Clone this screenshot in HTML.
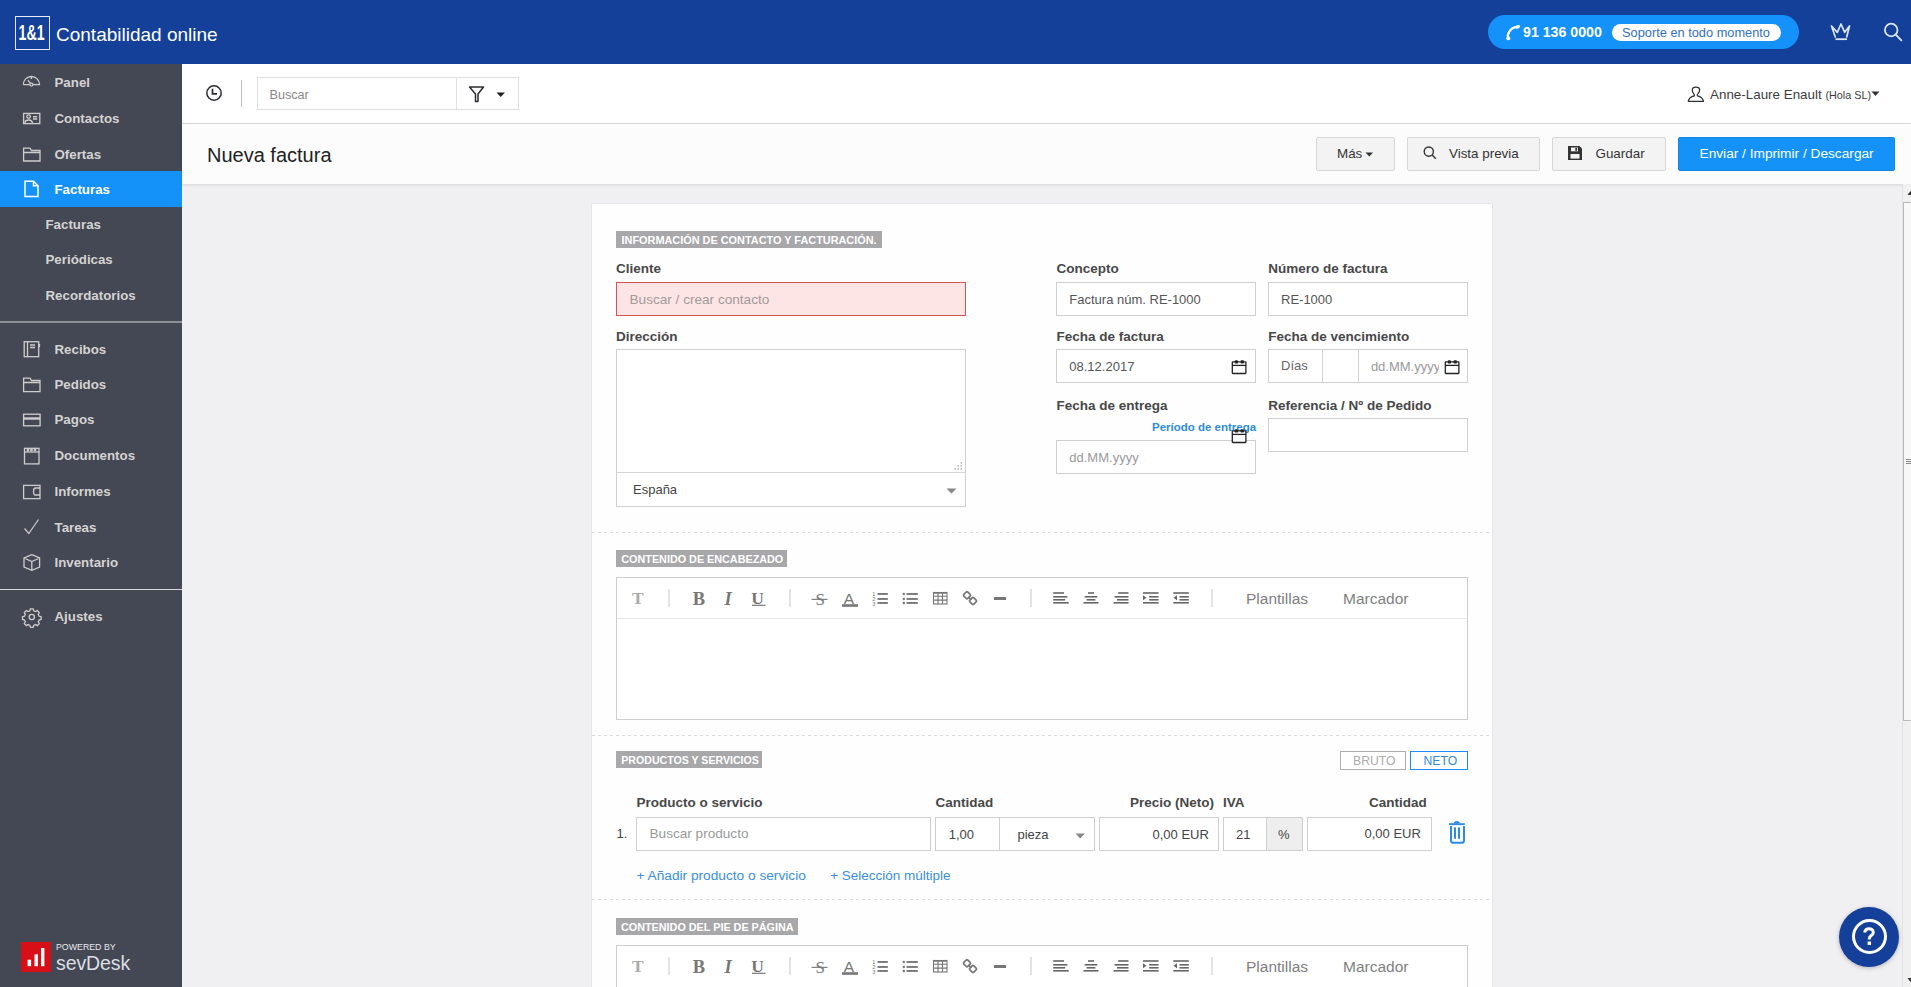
<!DOCTYPE html>
<html><head><meta charset="utf-8">
<style>
*{box-sizing:border-box;margin:0;padding:0}
html,body{width:1911px;height:987px;overflow:hidden;background:#f0eff2;font-family:"Liberation Sans",sans-serif;position:relative}
.a{position:absolute}
.t{position:absolute;line-height:1;white-space:nowrap}
#hdr{left:0;top:0;width:1911px;height:64px;background:#14409a}
#side{left:0;top:64px;width:182px;height:923px;background:#434854}
#topbar{left:182px;top:64px;width:1729px;height:60px;background:#fff;border-bottom:1px solid #dcdcdc}
#titlebar{left:182px;top:124px;width:1729px;height:60px;background:#fcfcfc;box-shadow:0 1px 3px rgba(0,0,0,.12)}
.nav{color:#d5d3d2;font-weight:bold;font-size:13.3px}
.navi{position:absolute;left:23px}
.btn{position:absolute;top:137px;height:34px;background:#f3f3f3;border:1px solid #d7d7d7;border-radius:2px}
.lbl{color:#484848;font-weight:bold;font-size:13.3px}
.inp{position:absolute;background:#fff;border:1px solid #cfcfcf}
.itx{color:#555;font-size:13px}
.ph{color:#9a9a9a;font-size:13px}
.badge{position:absolute;left:616px;height:17px;background:#a8a7aa;color:#fff;font-weight:bold;font-size:11px}
.dash{position:absolute;left:592px;width:900px;height:1px;background-image:linear-gradient(to right,#dcdcdc 50%,transparent 50%);background-size:6px 1px}
</style></head><body>

<!-- HEADER -->
<div id="hdr" class="a">
  <div class="a" style="left:15px;top:16px;width:34.5px;height:34px;border:1px solid #e8ecf6"></div>
  <svg class="a" style="left:15px;top:16px" width="35" height="34" viewBox="0 0 35 34"><text x="3.6" y="24.3" font-family="Liberation Sans" font-weight="bold" font-size="21.5" fill="#fff" textLength="26" lengthAdjust="spacingAndGlyphs">1&amp;1</text></svg>
  <div class="t" style="left:56px;top:24.5px;color:#fff;font-size:19px">Contabilidad online</div>
  <div class="a" style="left:1488px;top:15px;width:311px;height:34px;border-radius:17px;background:#1592fa"></div>
  <div class="t" style="left:1523px;top:25px;color:#fff;font-weight:bold;font-size:14.2px">91 136 0000</div>
  <div class="a" style="left:1612px;top:24px;width:169px;height:17px;border-radius:9px;background:#fff"></div>
  <div class="t" style="left:1622px;top:26.5px;color:#3270c0;font-size:12.8px">Soporte en todo momento</div>

  <svg class="a" style="left:1504px;top:24px" width="18" height="18" viewBox="0 0 18 18"><path d="M4 14.2 C3 10 5.5 5 11 3.2" fill="none" stroke="#fff" stroke-width="2.3" stroke-linecap="round"/><ellipse cx="4.3" cy="14.3" rx="2" ry="1.9" fill="#fff"/><ellipse cx="13.5" cy="2.9" rx="2.6" ry="1.7" transform="rotate(-20 13.5 2.9)" fill="#fff"/></svg>
  <svg class="a" style="left:1820px;top:15px" width="91" height="35" viewBox="1820 15 91 35" fill="none" stroke="#dbe5f5" stroke-width="1.7" stroke-linecap="round" stroke-linejoin="round"><path d="M1831.5 26 L1835.3 37 M1849.5 26 L1846.7 37 M1831.5 26 L1837.3 32.3 L1841 24 L1844.7 32.3 L1849.5 26"/><path d="M1835.5 39.2 H1847" stroke-width="1.8" stroke-linecap="butt"/><circle cx="1891.2" cy="30" r="6.3" stroke-width="1.8"/><path d="M1895.8 34.6 L1901.3 40.3" stroke-width="1.9"/></svg>
  
</div>

<!-- SIDEBAR -->
<div id="side" class="a"></div>
<div class="a" style="left:0;top:171px;width:182px;height:36px;background:#1592fa"></div>


<!-- SIDEBAR CONTENT -->
<svg class="a" style="left:0;top:64px" width="182" height="923" viewBox="0 64 182 923" fill="none" stroke="#cfcdcc" stroke-width="1.3">
  <!-- panel gauge -->
  <path d="M23.3 84.6 A8.1 8.1 0 0 1 39.5 84.6 H33 M29.8 84.6 H23.3"/>
  <path d="M31.4 76.8 v2.2 M27.8 80.2 L30.5 83.4"/><circle cx="31.4" cy="84.6" r="1.5"/>
  <!-- contactos card -->
  <rect x="23.6" y="113.4" width="16.2" height="10.2"/>
  <circle cx="28.6" cy="116.6" r="1.8"/>
  <path d="M24.8 123.4 q0-3.4 3.8-3.4 q3.8 0 3.8 3.4"/>
  <path d="M33 116.8 h4.2 M33 119 h4.2" stroke-width="1.5"/>
  <!-- ofertas folder -->
  <path d="M23.6 161 V148.2 H30 L31.5 150.5 H40 V161 Z M23.6 152.5 H40"/>
  <!-- recibos notebook -->
  <rect x="24.2" y="341.7" width="14.5" height="15"/>
  <path d="M27.5 341.7 V356.7 M30 345 h5 M30 347.5 h5 M39.5 344 v3" />
  <!-- pedidos folder -->
  <path d="M23.6 391.6 V378.2 H30 L31.5 380.5 H40 V391.6 Z M23.6 382.5 H40"/>
  <!-- pagos card -->
  <rect x="23.6" y="414.2" width="16.5" height="11.6"/>
  <path d="M23.6 418.5 H40" stroke-width="2.4"/>
  <!-- documentos -->
  <rect x="24.5" y="448.3" width="14.5" height="15.6"/>
  <path d="M24.5 452 H39"/>
  <circle cx="28" cy="450" r=".8"/><circle cx="31.5" cy="450" r=".8"/><circle cx="35" cy="450" r=".8"/>
  <!-- informes wallet -->
  <path d="M40 488 V485.3 H23.6 V498.7 H40 V495 M40 488 H35.5 Q33.5 488 33.5 491.5 Q33.5 495 35.5 495 H40 Z"/>
  <!-- tareas check -->
  <path d="M24.5 528.5 L28.8 533.5 L38.5 519.5" stroke-width="1.2"/>
  <!-- inventario cube -->
  <path d="M31.8 554.6 L39.6 558 V567 L31.8 570.3 L24 567 V558 Z M24 558 L31.8 561.6 L39.6 558 M31.8 561.6 V570.3"/>
  <!-- ajustes gear -->
  <circle cx="31.8" cy="617" r="2.6"/>
  <path d="M30.4 608.8 h2.8 l.5 2 l1.8 .8 l1.8-1 l2 2 l-1 1.8 l.8 1.8 l2 .5 v2.8 l-2 .5 l-.8 1.8 l1 1.8 l-2 2 l-1.8-1 l-1.8 .8 l-.5 2 h-2.8 l-.5-2 l-1.8-.8 l-1.8 1 l-2-2 l1-1.8 l-.8-1.8 l-2-.5 v-2.8 l2-.5 l.8-1.8 l-1-1.8 l2-2 l1.8 1 l1.8-.8 Z"/>
  <!-- separators -->
  <path d="M0 322 H182 M0 589.5 H182" stroke="#d9d9dc" stroke-width="1.2"/>
</svg>
<svg class="a" style="left:24px;top:180px" width="16" height="18" viewBox="0 0 16 18" fill="none" stroke="#fff" stroke-width="1.5">
  <path d="M1 1.2 H9.5 L14 5.7 V16.5 H1 Z M9.5 1.2 V5.7 H14"/>
</svg>
<div class="t nav" style="left:54.5px;top:76px">Panel</div>
<div class="t nav" style="left:54.5px;top:112px">Contactos</div>
<div class="t nav" style="left:54.5px;top:147.5px">Ofertas</div>
<div class="t nav" style="left:54.5px;top:183px;color:#fff">Facturas</div>
<div class="t nav" style="left:45.5px;top:218px">Facturas</div>
<div class="t nav" style="left:45.5px;top:253px">Periódicas</div>
<div class="t nav" style="left:45.5px;top:289px">Recordatorios</div>
<div class="t nav" style="left:54.5px;top:342.7px">Recibos</div>
<div class="t nav" style="left:54.5px;top:377.7px">Pedidos</div>
<div class="t nav" style="left:54.5px;top:413.3px">Pagos</div>
<div class="t nav" style="left:54.5px;top:449px">Documentos</div>
<div class="t nav" style="left:54.5px;top:485px">Informes</div>
<div class="t nav" style="left:54.5px;top:520.7px">Tareas</div>
<div class="t nav" style="left:54.5px;top:556.4px">Inventario</div>
<div class="t nav" style="left:54.5px;top:609.6px">Ajustes</div>
<!-- sevdesk -->
<div class="a" style="left:21px;top:942px;width:30px;height:30px;background:#d90f17"></div>
<svg class="a" style="left:21px;top:942px" width="30" height="30" viewBox="0 0 30 30"><rect x="6.6" y="17.7" width="3.5" height="6.5" fill="#fff"/><rect x="13.5" y="12.3" width="3.4" height="11.9" fill="#fff"/><rect x="20" y="6" width="3.4" height="18.2" fill="#fff"/></svg>
<div class="t" style="left:56px;top:943px;color:#e9e9ec;font-size:8.8px">POWERED BY</div>
<div class="t" style="left:56px;top:953.6px;color:#dddee3;font-size:19.5px;font-weight:300;letter-spacing:-.1px">sevDesk</div>

<!-- TOP BAR -->
<div id="topbar" class="a"></div>
<div id="titlebar" class="a"></div>
<div class="t" style="left:207px;top:145px;color:#222;font-size:20px">Nueva factura</div>


<!-- topbar content -->
<svg class="a" style="left:205px;top:84px" width="18" height="18" viewBox="0 0 18 18" fill="none" stroke="#2b2b33" stroke-width="1.5"><circle cx="9" cy="9" r="7.2"/><path d="M7.5 4.8 V9.8 H12" stroke-width="1.7"/></svg>
<div class="a" style="left:241px;top:80px;width:1px;height:27px;background:#bdbdbd"></div>
<div class="a" style="left:257px;top:77px;width:262px;height:33px;border:1px solid #dedede;background:#fff"></div>
<div class="a" style="left:456px;top:78px;width:1px;height:31px;background:#e2e2e2"></div>
<div class="t" style="left:269.5px;top:88.5px;color:#8a8a8a;font-size:12.6px">Buscar</div>
<svg class="a" style="left:468px;top:86px" width="17" height="17" viewBox="0 0 17 17" fill="none" stroke="#2b2b33" stroke-width="1.5"><path d="M1.5 1 H15.5 L10 8 V15.5 H7.5 V8 Z" stroke-linejoin="round"/></svg>
<svg class="a" style="left:496px;top:92px" width="10" height="6" viewBox="0 0 10 6"><path d="M0.5 0.5 H9 L4.75 5 Z" fill="#222"/></svg>
<svg class="a" style="left:1680px;top:80px" width="30" height="28" viewBox="1680 80 30 28"><path d="M1688.3 101.4 H1703.4 C1703 97.6 1700.2 96.4 1697.4 95.8 C1697 95.1 1697.2 94.5 1698 93.6 C1699.4 91.8 1699.8 90.4 1699.7 89.6 C1699.5 87.9 1698 87.2 1696 87.2 C1693.9 87.2 1692.4 88 1692.3 89.9 C1692.2 91.1 1692.6 92.6 1693.8 93.9 C1694.5 94.6 1694.6 95.2 1694.4 95.8 C1691.6 96.4 1688.7 97.6 1688.3 101.4 Z" fill="none" stroke="#333" stroke-width="1.3" stroke-linejoin="round"/></svg>
<div class="t" style="left:1710px;top:88px;color:#3d3d3d;font-size:13.4px">Anne-Laure Enault <span style="font-size:10.8px">(Hola SL)</span></div>
<svg class="a" style="left:1871px;top:91px" width="10" height="6" viewBox="0 0 10 6"><path d="M0.5 0.5 H8.5 L4.5 5 Z" fill="#333"/></svg>

<!-- title bar buttons -->
<div class="btn" style="left:1316px;width:79px"></div>
<div class="t" style="left:1337px;top:147px;color:#333;font-size:13.4px">Más</div>
<svg class="a" style="left:1365px;top:152px" width="9" height="5" viewBox="0 0 9 5"><path d="M0.5 0.5 H8 L4.25 4.5 Z" fill="#333"/></svg>
<div class="btn" style="left:1407px;width:133px"></div>
<svg class="a" style="left:1422px;top:145px" width="16" height="16" viewBox="0 0 16 16" fill="none" stroke="#333" stroke-width="1.4"><circle cx="6.8" cy="6.6" r="4.6"/><path d="M10.2 10 L13.8 13.8"/></svg>
<div class="t" style="left:1449px;top:147px;color:#333;font-size:13.4px">Vista previa</div>
<div class="btn" style="left:1552px;width:114px"></div>
<svg class="a" style="left:1567px;top:145px" width="16" height="16" viewBox="0 0 16 16"><path d="M1 1 H12.5 L15 3.5 V15 H1 Z" fill="#333"/><rect x="4" y="2.5" width="7" height="3.8" fill="#f3f3f3"/><rect x="8.3" y="3" width="1.8" height="2.8" fill="#333"/><rect x="3.5" y="9" width="9" height="4.6" fill="#f3f3f3"/></svg>
<div class="t" style="left:1595.5px;top:147px;color:#333;font-size:13.4px">Guardar</div>
<div class="a" style="left:1678px;top:137px;width:217px;height:34px;background:#1592f8;border:1px solid #1386e4;border-radius:2px"></div>
<div class="t" style="left:1699.5px;top:147px;color:#fff;font-size:13.7px">Enviar / Imprimir / Descargar</div>

<!-- CARD -->
<div class="a" style="left:591px;top:203px;width:902px;height:800px;background:#fefefe;border:1px solid #e6e5e8"></div>
<div class="badge" style="top:231px;width:266px"></div>
<div class="t " style="left:621.5px;top:234.97px;font-size:10.9px;color:#fff;font-weight:bold">INFORMACIÓN DE CONTACTO Y FACTURACIÓN.</div>
<div class="t lbl" style="left:616px;top:261.87px;font-size:13.5px">Cliente</div>
<div class="inp" style="left:616px;top:282px;width:350px;height:34px;background:#fde5e5;border-color:#d8514f"></div>
<div class="t ph" style="left:629.5px;top:292.89px;font-size:13.6px;color:#a49a9a">Buscar / crear contacto</div>
<div class="t lbl" style="left:616px;top:330.07px;font-size:13.5px">Dirección</div>
<div class="inp" style="left:616px;top:349px;width:350px;height:158px;"></div>
<div class="a" style="left:617px;top:472px;width:348px;height:1px;background:#d5d5d5"></div>
<svg class="a" style="left:950px;top:458px" width="15" height="15" viewBox="950 458 15 15" fill="#999"><rect x="960.6" y="462.3" width="1.3" height="1.3"/><rect x="957.6" y="465.3" width="1.3" height="1.3"/><rect x="960.6" y="465.3" width="1.3" height="1.3"/><rect x="954.6" y="468.3" width="1.3" height="1.3"/><rect x="957.6" y="468.3" width="1.3" height="1.3"/><rect x="960.6" y="468.3" width="1.3" height="1.3"/></svg>
<div class="t itx" style="left:633px;top:483.00px;font-size:13px;color:#444">España</div>
<svg class="a" style="left:946px;top:487.5px" width="11" height="6" viewBox="0 0 11 6"><path d="M0.5 0.5 H10.5 L5.5 5.5 Z" fill="#888"/></svg>
<div class="t lbl" style="left:1056.4px;top:261.87px;font-size:13.5px">Concepto</div>
<div class="inp" style="left:1056px;top:282px;width:200px;height:34px;"></div>
<div class="t itx" style="left:1069.3px;top:293.00px;font-size:13px;">Factura núm. RE-1000</div>
<div class="t lbl" style="left:1268.3px;top:261.87px;font-size:13.5px">Número de factura</div>
<div class="inp" style="left:1268px;top:282px;width:200px;height:34px;"></div>
<div class="t itx" style="left:1281px;top:293.00px;font-size:13px;">RE-1000</div>
<div class="t lbl" style="left:1056.4px;top:330.07px;font-size:13.5px">Fecha de factura</div>
<div class="inp" style="left:1056px;top:349px;width:200px;height:34px;"></div>
<div class="t itx" style="left:1069.3px;top:360.00px;font-size:13px;">08.12.2017</div>
<svg class="a" style="left:1231px;top:359px" width="17" height="16" viewBox="0 0 17 16"><g fill="none" stroke="#222" stroke-width="1.3"><rect x="1.3" y="2.8" width="13.6" height="11.7" rx=".5" fill="#fff"/><path d="M1.3 6.4 H14.9"/></g><rect x="3.7" y="1.3" width="3.3" height="3.3" rx="1.2" fill="#222"/><rect x="9.6" y="1.3" width="3.3" height="3.3" rx=".8" fill="#222"/></svg>
<div class="t lbl" style="left:1268.3px;top:330.07px;font-size:13.5px">Fecha de vencimiento</div>
<div class="inp" style="left:1268px;top:349px;width:200px;height:34px;"></div>
<div class="a" style="left:1322px;top:350px;width:1px;height:32px;background:#d5d5d5"></div>
<div class="a" style="left:1358px;top:350px;width:1px;height:32px;background:#d5d5d5"></div>
<div class="t itx" style="left:1281px;top:359.30px;font-size:13px;color:#666">Días</div>
<div class="a" style="left:1370px;top:358px;width:69px;height:18px;overflow:hidden"><div class="t ph" style="left:0.9px;top:2.00px;font-size:13px;">dd.MM.yyyy</div></div>
<svg class="a" style="left:1444px;top:359px" width="17" height="16" viewBox="0 0 17 16"><g fill="none" stroke="#222" stroke-width="1.3"><rect x="1.3" y="2.8" width="13.6" height="11.7" rx=".5" fill="#fff"/><path d="M1.3 6.4 H14.9"/></g><rect x="3.7" y="1.3" width="3.3" height="3.3" rx="1.2" fill="#222"/><rect x="9.6" y="1.3" width="3.3" height="3.3" rx=".8" fill="#222"/></svg>
<div class="t lbl" style="left:1056.4px;top:398.57px;font-size:13.5px">Fecha de entrega</div>
<div class="t " style="left:1152px;top:422.07px;font-size:11.5px;color:#2e8bd8;font-weight:bold">Período de entrega</div>
<div class="inp" style="left:1056px;top:440px;width:200px;height:34px;"></div>
<div class="t ph" style="left:1069.3px;top:451.00px;font-size:13px;">dd.MM.yyyy</div>
<svg class="a" style="left:1231px;top:428px" width="17" height="16" viewBox="0 0 17 16"><g fill="none" stroke="#222" stroke-width="1.3"><rect x="1.3" y="2.8" width="13.6" height="11.7" rx=".5" fill="#fff"/><path d="M1.3 6.4 H14.9"/></g><rect x="3.7" y="1.3" width="3.3" height="3.3" rx="1.2" fill="#222"/><rect x="9.6" y="1.3" width="3.3" height="3.3" rx=".8" fill="#222"/></svg>
<div class="t lbl" style="left:1268.3px;top:398.57px;font-size:13.5px">Referencia / Nº de Pedido</div>
<div class="inp" style="left:1268px;top:418px;width:200px;height:34px;"></div>
<div class="dash" style="top:532px"></div>
<div class="badge" style="top:550px;width:171px"></div>
<div class="t " style="left:621.3px;top:554.06px;font-size:10.8px;color:#fff;font-weight:bold">CONTENIDO DE ENCABEZADO</div>
<div class="inp" style="left:616px;top:577px;width:852px;height:143px;border-color:#cdcdcd"></div>
<div class="a" style="left:617px;top:618px;width:850px;height:1px;background:#e6e6e6"></div>
<svg class="a" style="left:616px;top:577px" width="852" height="42" viewBox="616 577 852 42">
<rect x="668.5" y="589" width="1" height="18" fill="#c8c8c8"/>
<rect x="789.5" y="589" width="1" height="18" fill="#c8c8c8"/>
<rect x="1030.5" y="589" width="1" height="18" fill="#c8c8c8"/>
<rect x="1211.5" y="589" width="1" height="18" fill="#c8c8c8"/>
<text x="632" y="604" font-family="Liberation Serif" font-weight="bold" font-size="17.5" fill="#aaa">T</text>
<text x="692.8" y="605.2" font-family="Liberation Serif" font-weight="bold" font-size="18.5" fill="#777">B</text>
<text x="724.6" y="605.2" font-family="Liberation Serif" font-weight="bold" font-style="italic" font-size="18.5" fill="#777">I</text>
<text x="751.3" y="603.7" font-family="Liberation Serif" font-weight="bold" font-size="17.5" fill="#777">U</text>
<rect x="752" y="604.7" width="13.5" height="1.2" fill="#777"/>
<text x="815.4" y="605" font-family="Liberation Serif" font-size="17" fill="#777">S</text>
<rect x="811.5" y="598.8" width="16" height="1.1" fill="#777"/>
<text x="843.8" y="603.6" font-family="Liberation Sans" font-size="15.5" fill="#777">A</text>
<rect x="842" y="604.2" width="16" height="2.6" fill="#777"/>
<text x="872.3" y="596" font-family="Liberation Sans" font-size="5.5" fill="#777">1</text>
<text x="872.3" y="601" font-family="Liberation Sans" font-size="5.5" fill="#777">2</text>
<text x="872.3" y="606" font-family="Liberation Sans" font-size="5.5" fill="#777">3</text>
<rect x="877.5" y="593" width="10.3" height="1.9" fill="#777"/>
<rect x="877.5" y="598" width="10.3" height="1.9" fill="#777"/>
<rect x="877.5" y="602" width="10.3" height="1.9" fill="#777"/>
<circle cx="903.8" cy="594" r="1.2" fill="#777"/>
<rect x="906.5" y="593" width="11.3" height="1.9" fill="#777"/>
<circle cx="903.8" cy="599" r="1.2" fill="#777"/>
<rect x="906.5" y="598" width="11.3" height="1.9" fill="#777"/>
<circle cx="903.8" cy="603" r="1.2" fill="#777"/>
<rect x="906.5" y="602" width="11.3" height="1.9" fill="#777"/>
<g fill="none" stroke="#777" stroke-width="1.1"><rect x="933.5" y="592.5" width="13.5" height="11.5"/><rect x="933.5" y="592.5" width="13.5" height="1.2" fill="#777" stroke="none"/><path d="M933.5 596.3 H947 M933.5 600.1 H947 M938 592.5 V604 M942.5 592.5 V604"/></g>
<g fill="none" stroke="#777" stroke-width="1.7"><rect x="964.2" y="592.5" width="5.6" height="5.6" rx="1.2" transform="rotate(45 967 595.3)"/><rect x="970.2" y="598.2" width="5.6" height="5.6" rx="1.2" transform="rotate(45 973 601)"/><path d="M968.5 597 L971.5 600"/></g>
<rect x="994" y="597" width="12" height="3" fill="#777"/>
<rect x="1053.2" y="592.2" width="10.8" height="1.6" fill="#666"/><rect x="1053.2" y="596" width="14.1" height="1.6" fill="#666"/><rect x="1053.2" y="599" width="12" height="1.6" fill="#666"/><rect x="1053.2" y="602" width="15.5" height="1.6" fill="#666"/>
<rect x="1088.0" y="592.2" width="6.0" height="1.6" fill="#666"/><rect x="1084.7" y="596" width="12.600000000000001" height="1.6" fill="#666"/><rect x="1086.6" y="599" width="8.8" height="1.6" fill="#666"/><rect x="1083.5" y="602" width="15" height="1.6" fill="#666"/>
<rect x="1118.1" y="592.2" width="10.4" height="1.6" fill="#666"/><rect x="1114.5" y="596" width="14" height="1.6" fill="#666"/><rect x="1117.0" y="599" width="11.5" height="1.6" fill="#666"/><rect x="1113.5" y="602" width="15" height="1.6" fill="#666"/>
<rect x="1143" y="592.2" width="15.6" height="1.6" fill="#666"/><rect x="1149.2" y="596" width="9.399999999999999" height="1.6" fill="#666"/><rect x="1149.2" y="599" width="9.399999999999999" height="1.6" fill="#666"/><rect x="1143" y="602" width="15.6" height="1.6" fill="#666"/>
<path d="M1143 595.3 L1146.5 597.8 L1143 600.3 Z" fill="#666"/>
<rect x="1173.3" y="592.2" width="15.5" height="1.6" fill="#666"/><rect x="1179.5" y="596" width="9.3" height="1.6" fill="#666"/><rect x="1179.5" y="599" width="9.3" height="1.6" fill="#666"/><rect x="1173.3" y="602" width="15.5" height="1.6" fill="#666"/>
<path d="M1177 595.3 L1173.5 597.8 L1177 600.3 Z" fill="#666"/>
<text x="1246" y="603.5" font-family="Liberation Sans" font-size="15.5" fill="#808080">Plantillas</text>
<text x="1343" y="603.5" font-family="Liberation Sans" font-size="15.5" fill="#808080">Marcador</text>
</svg>
<div class="dash" style="top:735px"></div>
<div class="badge" style="top:751px;width:146px"></div>
<div class="t " style="left:621.3px;top:755.23px;font-size:10.6px;color:#fff;font-weight:bold">PRODUCTOS Y SERVICIOS</div>
<div class="a" style="left:1340px;top:751px;width:66px;height:19px;border:1px solid #aeaeae;background:#fff"></div>
<div class="t " style="left:1353px;top:754.67px;font-size:12.2px;color:#aaa">BRUTO</div>
<div class="a" style="left:1410px;top:751px;width:58px;height:19px;border:1px solid #1a8cff;background:#fff"></div>
<div class="t " style="left:1423.5px;top:754.67px;font-size:12.2px;color:#2e8bd8">NETO</div>
<div class="t lbl" style="left:636.5px;top:795.97px;font-size:13.5px">Producto o servicio</div>
<div class="t lbl" style="left:935.5px;top:795.97px;font-size:13.5px">Cantidad</div>
<div class="t lbl" style="left:1130px;top:795.97px;font-size:13.5px">Precio (Neto)</div>
<div class="t lbl" style="left:1223px;top:795.97px;font-size:13.5px">IVA</div>
<div class="t lbl" style="left:1369px;top:795.97px;font-size:13.5px">Cantidad</div>
<div class="t itx" style="left:616.5px;top:826.50px;font-size:13px;color:#444">1.</div>
<div class="inp" style="left:636px;top:817px;width:295px;height:34px;"></div>
<div class="t ph" style="left:649.5px;top:827.29px;font-size:13.6px;">Buscar producto</div>
<div class="inp" style="left:935px;top:817px;width:65px;height:34px;"></div>
<div class="t itx" style="left:948.7px;top:827.80px;font-size:13px;color:#444">1,00</div>
<div class="inp" style="left:999px;top:817px;width:96px;height:34px;"></div>
<div class="t itx" style="left:1017.5px;top:827.80px;font-size:13px;color:#444">pieza</div>
<svg class="a" style="left:1075px;top:833px" width="11" height="6" viewBox="0 0 11 6"><path d="M0.5 0.5 H10 L5.25 5.5 Z" fill="#888"/></svg>
<div class="inp" style="left:1099px;top:817px;width:120px;height:34px;"></div>
<div class="t itx" style="left:1152.5px;top:827.80px;font-size:13px;color:#444">0,00 EUR</div>
<div class="inp" style="left:1223px;top:817px;width:80px;height:34px;"></div>
<div class="a" style="left:1266px;top:818px;width:36px;height:32px;background:#eeeeee;border-left:1px solid #d0d0d0"></div>
<div class="t itx" style="left:1236px;top:827.80px;font-size:13px;color:#444">21</div>
<div class="t itx" style="left:1278px;top:827.80px;font-size:13px;color:#444">%</div>
<div class="inp" style="left:1307px;top:817px;width:125px;height:34px;"></div>
<div class="t itx" style="left:1364.5px;top:827.00px;font-size:13px;color:#444">0,00 EUR</div>
<svg class="a" style="left:1440px;top:815px" width="35" height="35" viewBox="0 0 35 35" fill="#2d8be6"><rect x="9" y="8.2" width="15.8" height="1.9"/><path d="M13.8 8.6 A3 2.6 0 0 1 19.8 8.6 Z"/><path d="M11 11 V25.4 Q11 27.8 13.4 27.8 H21.6 Q24 27.8 24 25.4 V11" fill="none" stroke="#2d8be6" stroke-width="2"/><rect x="14" y="12.4" width="2" height="11.4"/><rect x="18" y="12.4" width="2" height="11.4"/></svg>
<div class="t " style="left:636.5px;top:869.20px;font-size:13.7px;color:#3a8fdc">+ Añadir producto o servicio</div>
<div class="t " style="left:830.2px;top:869.37px;font-size:13.5px;color:#3a8fdc">+ Selección múltiple</div>
<div class="dash" style="top:899px"></div>
<div class="badge" style="top:918px;width:182px"></div>
<div class="t " style="left:621px;top:922.36px;font-size:10.8px;color:#fff;font-weight:bold">CONTENIDO DEL PIE DE PÁGINA</div>
<div class="inp" style="left:616px;top:945px;width:852px;height:155px;border-color:#cdcdcd"></div>
<svg class="a" style="left:616px;top:945px" width="852" height="42" viewBox="616 577 852 42">
<rect x="668.5" y="589" width="1" height="18" fill="#c8c8c8"/>
<rect x="789.5" y="589" width="1" height="18" fill="#c8c8c8"/>
<rect x="1030.5" y="589" width="1" height="18" fill="#c8c8c8"/>
<rect x="1211.5" y="589" width="1" height="18" fill="#c8c8c8"/>
<text x="632" y="604" font-family="Liberation Serif" font-weight="bold" font-size="17.5" fill="#aaa">T</text>
<text x="692.8" y="605.2" font-family="Liberation Serif" font-weight="bold" font-size="18.5" fill="#777">B</text>
<text x="724.6" y="605.2" font-family="Liberation Serif" font-weight="bold" font-style="italic" font-size="18.5" fill="#777">I</text>
<text x="751.3" y="603.7" font-family="Liberation Serif" font-weight="bold" font-size="17.5" fill="#777">U</text>
<rect x="752" y="604.7" width="13.5" height="1.2" fill="#777"/>
<text x="815.4" y="605" font-family="Liberation Serif" font-size="17" fill="#777">S</text>
<rect x="811.5" y="598.8" width="16" height="1.1" fill="#777"/>
<text x="843.8" y="603.6" font-family="Liberation Sans" font-size="15.5" fill="#777">A</text>
<rect x="842" y="604.2" width="16" height="2.6" fill="#777"/>
<text x="872.3" y="596" font-family="Liberation Sans" font-size="5.5" fill="#777">1</text>
<text x="872.3" y="601" font-family="Liberation Sans" font-size="5.5" fill="#777">2</text>
<text x="872.3" y="606" font-family="Liberation Sans" font-size="5.5" fill="#777">3</text>
<rect x="877.5" y="593" width="10.3" height="1.9" fill="#777"/>
<rect x="877.5" y="598" width="10.3" height="1.9" fill="#777"/>
<rect x="877.5" y="602" width="10.3" height="1.9" fill="#777"/>
<circle cx="903.8" cy="594" r="1.2" fill="#777"/>
<rect x="906.5" y="593" width="11.3" height="1.9" fill="#777"/>
<circle cx="903.8" cy="599" r="1.2" fill="#777"/>
<rect x="906.5" y="598" width="11.3" height="1.9" fill="#777"/>
<circle cx="903.8" cy="603" r="1.2" fill="#777"/>
<rect x="906.5" y="602" width="11.3" height="1.9" fill="#777"/>
<g fill="none" stroke="#777" stroke-width="1.1"><rect x="933.5" y="592.5" width="13.5" height="11.5"/><rect x="933.5" y="592.5" width="13.5" height="1.2" fill="#777" stroke="none"/><path d="M933.5 596.3 H947 M933.5 600.1 H947 M938 592.5 V604 M942.5 592.5 V604"/></g>
<g fill="none" stroke="#777" stroke-width="1.7"><rect x="964.2" y="592.5" width="5.6" height="5.6" rx="1.2" transform="rotate(45 967 595.3)"/><rect x="970.2" y="598.2" width="5.6" height="5.6" rx="1.2" transform="rotate(45 973 601)"/><path d="M968.5 597 L971.5 600"/></g>
<rect x="994" y="597" width="12" height="3" fill="#777"/>
<rect x="1053.2" y="592.2" width="10.8" height="1.6" fill="#666"/><rect x="1053.2" y="596" width="14.1" height="1.6" fill="#666"/><rect x="1053.2" y="599" width="12" height="1.6" fill="#666"/><rect x="1053.2" y="602" width="15.5" height="1.6" fill="#666"/>
<rect x="1088.0" y="592.2" width="6.0" height="1.6" fill="#666"/><rect x="1084.7" y="596" width="12.600000000000001" height="1.6" fill="#666"/><rect x="1086.6" y="599" width="8.8" height="1.6" fill="#666"/><rect x="1083.5" y="602" width="15" height="1.6" fill="#666"/>
<rect x="1118.1" y="592.2" width="10.4" height="1.6" fill="#666"/><rect x="1114.5" y="596" width="14" height="1.6" fill="#666"/><rect x="1117.0" y="599" width="11.5" height="1.6" fill="#666"/><rect x="1113.5" y="602" width="15" height="1.6" fill="#666"/>
<rect x="1143" y="592.2" width="15.6" height="1.6" fill="#666"/><rect x="1149.2" y="596" width="9.399999999999999" height="1.6" fill="#666"/><rect x="1149.2" y="599" width="9.399999999999999" height="1.6" fill="#666"/><rect x="1143" y="602" width="15.6" height="1.6" fill="#666"/>
<path d="M1143 595.3 L1146.5 597.8 L1143 600.3 Z" fill="#666"/>
<rect x="1173.3" y="592.2" width="15.5" height="1.6" fill="#666"/><rect x="1179.5" y="596" width="9.3" height="1.6" fill="#666"/><rect x="1179.5" y="599" width="9.3" height="1.6" fill="#666"/><rect x="1173.3" y="602" width="15.5" height="1.6" fill="#666"/>
<path d="M1177 595.3 L1173.5 597.8 L1177 600.3 Z" fill="#666"/>
<text x="1246" y="603.5" font-family="Liberation Sans" font-size="15.5" fill="#808080">Plantillas</text>
<text x="1343" y="603.5" font-family="Liberation Sans" font-size="15.5" fill="#808080">Marcador</text>
</svg>
<!-- /CARD -->

<!-- scrollbar -->
<div class="a" style="left:1902px;top:184px;width:9px;height:803px;background:#f0f0f0;border-left:1px solid #e3e3e3"></div>
<svg class="a" style="left:1906.5px;top:189.5px" width="7" height="6" viewBox="0 0 7 6"><path d="M0.5 5 L3.5 1 L6.5 5 Z" fill="#333"/></svg>
<div class="a" style="left:1903px;top:202px;width:8px;height:519px;background:#f7f7f7;border:1px solid #b9b9b9;border-right:none;border-radius:1px"></div>
<div class="a" style="left:1906px;top:459px;width:5px;height:1px;background:#888"></div>
<div class="a" style="left:1906px;top:461px;width:5px;height:1px;background:#888"></div>
<div class="a" style="left:1906px;top:463px;width:5px;height:1px;background:#888"></div>
<svg class="a" style="left:1906.5px;top:977px" width="7" height="6" viewBox="0 0 7 6"><path d="M0.5 1 L3.5 5 L6.5 1 Z" fill="#333"/></svg>
<!-- help -->
<div class="a" style="left:1839px;top:907px;width:60px;height:60px;border-radius:50%;background:#14409a;box-shadow:0 1px 4px rgba(0,0,0,.25)"></div>
<div class="a" style="left:1852px;top:919px;width:35px;height:35px;border-radius:50%;border:3.6px solid #fff"></div>
<svg class="a" style="left:1862px;top:927px" width="14" height="20" viewBox="0 0 14 20"><path d="M2.8 5.6 C2.8 3 4.6 1.8 7 1.8 C9.5 1.8 11.3 3.2 11.3 5.4 C11.3 7.2 10.2 8 9 8.8 C7.9 9.6 7.3 10.2 7.3 11.8 V12.6" fill="none" stroke="#fff" stroke-width="3"/><rect x="5.6" y="14.5" width="3.4" height="3.4" fill="#fff"/></svg>
</body></html>
